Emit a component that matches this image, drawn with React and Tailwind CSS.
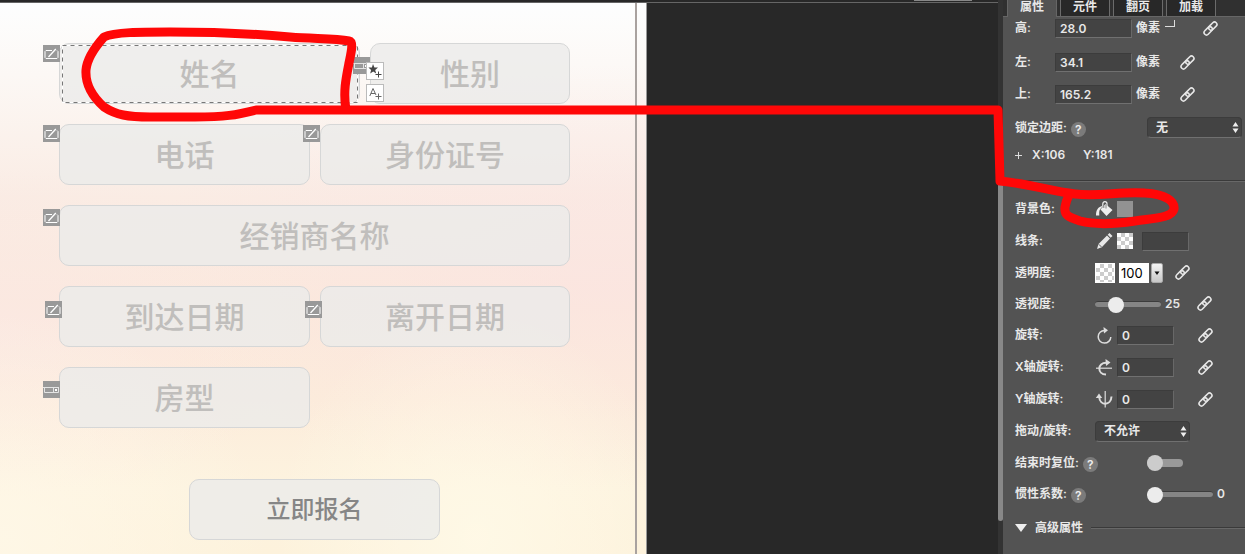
// src/App.jsx
import React, { useState } from "react";

const checker = "bg-white bg-[conic-gradient(#ccc_25%,#fff_0_50%,#ccc_0_75%,#fff_0)] bg-[length:8px_8px]";

function LinkIcon() {
  return (
    <svg className="w-[15px] h-[15px]" viewBox="0 0 15 15" fill="none" stroke="#e6e6e6" strokeWidth="1.6">
      <rect x="5" y="2.7" width="9.6" height="4.8" rx="2.4" transform="rotate(-45 9.8 5.1)" />
      <rect x="0.4" y="7.4" width="9.6" height="4.8" rx="2.4" transform="rotate(-45 5.2 9.8)" />
    </svg>
  );
}

function LinkButton({ className }) {
  return <button type="button" aria-label="link" className={className}><LinkIcon /></button>;
}

function Help() {
  return <button type="button" aria-label="help" className="ml-1 mt-1 w-[15px] h-[15px] rounded-full bg-[#7b7b7b] text-[12px] leading-[15px] text-center text-[#eee]">?</button>;
}

function InputBadge({ className }) {
  return (
    <svg className={"absolute w-[17px] h-[17px] " + className} viewBox="0 0 17 17" fill="none" stroke="#fff" strokeWidth="1">
      <rect width="17" height="17" fill="#999" stroke="none" />
      <path d="M9 5.5H3L2 6.5V12.5L3 13.5H14L15 12.5V6.5L14 5.5" />
      <path d="M5.5 12 12.8 4" strokeWidth="1.3" />
    </svg>
  );
}

function SelectBadge({ className }) {
  return (
    <svg className={"absolute w-[17px] h-[17px] " + className} viewBox="0 0 17 17" fill="none" stroke="#e4e4e4" strokeWidth="1">
      <rect width="17" height="17" fill="#999" stroke="none" />
      <path d="M0 6.5H16M1.5 7V11.5H15.5V7M10.5 7V11" />
      <rect x="12.5" y="8.5" width="1" height="1" stroke="#fff" />
    </svg>
  );
}

function Field({ label, width, children }) {
  return (
    <div className={"relative " + width}>
      <input
        aria-label={label}
        placeholder={label}
        className="block w-full h-[61px] rounded-[10px] border border-[#d6d7d7] bg-[#ebebea]/80 text-center text-[30px] font-medium text-[#777] placeholder:text-[#c0bebc] outline-none"
      />
      {children}
    </div>
  );
}

function Stage() {
  return (
    <div className="flex flex-1 w-[647px] bg-[radial-gradient(ellipse_at_95%_50%,rgba(251,226,226,0.55),transparent_55%),linear-gradient(180deg,#fdfefe_0%,#fcf8f5_13%,#faece4_35%,#fbe9dc_55%,#fcecdb_72%,#fdf3df_88%,#fdf2dc_100%)]">
      <form className="w-[637px] border-r-2 border-[#a9a29f] pl-[59px] pt-10 bg-[radial-gradient(ellipse_at_0%_97%,rgba(255,249,234,0.7),transparent_30%),radial-gradient(ellipse_at_75%_97%,rgba(255,250,232,0.8),transparent_30%),radial-gradient(ellipse_at_0%_60%,rgba(251,232,228,0.7),transparent_35%)]">
        <div className="flex flex-col gap-5 w-[511px]">
          <div className="flex gap-[10px]">
            <Field label="姓名" width="w-[301px]">
              <svg className="absolute left-[3px] top-[2px] w-[297px] h-[59px] pointer-events-none" viewBox="0 0 297 59" fill="none">
                <rect x="0.5" y="0.5" width="295" height="57" stroke="#fff" />
                <rect x="0.5" y="0.5" width="295" height="57" stroke="#777" strokeDasharray="4 4" />
              </svg>
              <InputBadge className="-left-4 top-[2px]" />
            </Field>
            <Field label="性别" width="flex-1">
              <SelectBadge className="-left-[17px] top-[14px]" />
              <div className="absolute -left-1 top-[19px] flex flex-col gap-[4px]">
                <button type="button" aria-label="star" className="w-[18px] h-[18px] bg-white border border-[#bbb]">
                  <svg className="w-4 h-4" viewBox="0 0 16 16">
                    <path d="M6 1 7.4 4.4 11 4.6 8.2 6.9 9.2 10.4 6.2 8.5 3.2 10.4 4.1 6.9 1.4 4.6 4.9 4.4Z" fill="#444" />
                    <path d="M11.5 8.5V14.5M8.5 11.5H14.5" stroke="#444" />
                  </svg>
                </button>
                <button type="button" aria-label="text" className="w-[18px] h-[18px] bg-white border border-[#bbb]">
                  <svg className="w-4 h-4" viewBox="0 0 16 16" fill="none" stroke="#666">
                    <path d="M2.8 11 6 3.5 9 10M4 8.5H8M11.5 8.5V14.5M8.5 11.5H14.5" />
                  </svg>
                </button>
              </div>
            </Field>
          </div>
          <div className="flex gap-[10px]">
            <Field label="电话" width="w-[251px]"><InputBadge className="-left-4 top-[1px]" /></Field>
            <Field label="身份证号" width="flex-1"><InputBadge className="-left-[17px] top-[1px]" /></Field>
          </div>
          <Field label="经销商名称" width="w-full"><InputBadge className="-left-4 top-1" /></Field>
          <div className="flex gap-[10px]">
            <Field label="到达日期" width="w-[251px]"><InputBadge className="-left-[14px] top-[15px]" /></Field>
            <Field label="离开日期" width="flex-1"><InputBadge className="-left-[15px] top-[15px]" /></Field>
          </div>
          <Field label="房型" width="w-[251px]"><SelectBadge className="-left-4 top-[14px]" /></Field>
          <button type="button" className="self-center mt-[31px] w-[251px] h-[61px] rounded-[10px] border border-[#d6d7d7] bg-[#ebebea]/80 text-[24px] font-medium text-[#868686]">立即报名</button>
        </div>
      </form>
      <div className="flex-1 border-r border-[#999]" />
    </div>
  );
}

function Row({ label, wide, className = "h-8", help, children }) {
  return (
    <div className={"flex items-center " + className}>
      <div className={"flex items-center shrink-0 whitespace-nowrap " + wide}>
        <span>{label}</span>
        {help && <Help />}
      </div>
      {children}
    </div>
  );
}

function Box({ label, width, value }) {
  return <input aria-label={label} defaultValue={value} className={"h-[19px] pl-[4px] bg-[#434343] border border-[#3c3c3c] border-r-[#686868] border-b-[#707070] text-[12px] leading-4 outline-none " + width} />;
}

function Select({ label, value }) {
  return (
    <div className="relative w-[95px]">
      <select aria-label={label} className="block w-full h-[21px] pl-2 appearance-none rounded bg-[#434343] border border-[#3c3c3c] border-b-[#707070] text-[12px] outline-none">
        <option>{value}</option>
      </select>
      <svg className="absolute right-[3px] top-[5px] w-[7px] h-[11px] pointer-events-none" viewBox="0 0 7 11" fill="#eee">
        <path d="M3.5 0 6.5 4.5H.5ZM3.5 11 .5 6.5H6.5Z" />
      </svg>
    </div>
  );
}

function Slider({ label, value, onChange }) {
  return (
    <input
      type="range"
      aria-label={label}
      value={value}
      onChange={e => onChange(e.target.value)}
      className="w-[66px] h-4 appearance-none bg-transparent [&::-webkit-slider-runnable-track]:h-[6px] [&::-webkit-slider-runnable-track]:rounded-sm [&::-webkit-slider-runnable-track]:bg-[#858585] [&::-webkit-slider-runnable-track]:border-t [&::-webkit-slider-runnable-track]:border-[#3c3c3c] [&::-webkit-slider-thumb]:appearance-none [&::-webkit-slider-thumb]:-mt-[5px] [&::-webkit-slider-thumb]:w-4 [&::-webkit-slider-thumb]:h-4 [&::-webkit-slider-thumb]:rounded-full [&::-webkit-slider-thumb]:bg-[#ececec]"
    />
  );
}

function RotateIcon({ axis }) {
  return (
    <svg className="w-[18px] h-[18px] mr-1" viewBox="0 0 18 18" fill="none" stroke="#ddd" strokeWidth="1.5">
      {axis === "z" && <><path d="M9.5 4.5A6.3 6.3 0 1 0 15.8 11" /><path d="M8.5 1 13 4.2 9 7.5Z" fill="#ddd" stroke="none" /></>}
      {axis === "x" && <><path d="M11.5 4.8C2 4.5 2 16 11 16.6" strokeWidth="2" /><path d="M1 10.2H17" strokeWidth="1.2" /><path d="M10.5 1 15.5 4.5 11 8Z" fill="#ddd" stroke="none" /></>}
      {axis === "y" && <><path d="M4.2 7C4.8 16 16 16 16.5 6.5" strokeWidth="2" /><path d="M10.2 1V17.5" strokeWidth="1.2" /><path d="M.8 8 4 3.5 7.2 8Z" fill="#ddd" stroke="none" /></>}
    </svg>
  );
}

function Panel() {
  const [perspective, setPerspective] = useState(25);
  const [inertia, setInertia] = useState(0);
  const tabs = ["属性", "元件", "翻页", "加载"];

  return (
    <aside className="w-[242px] shrink-0 bg-[#535353] text-[12px] font-semibold text-[#e8e8e8]">
      <nav className="flex gap-[3px] h-[17px] pl-1 bg-[#303030] border-b border-[#666]">
        {tabs.map((tab, i) => (
          <button
            key={tab}
            type="button"
            className={i === 0
              ? "w-[50px] h-[17px] leading-[14px] pb-[3px] bg-[#535353] border-x border-[#666]"
              : "w-[50px] h-4 leading-[14px] pb-[2px] bg-[#282828] border-x border-[#6b6b6b]"}
          >
            {tab}
          </button>
        ))}
      </nav>
      <div className="pl-3">
        <Row label="高:" wide="w-10" className="h-[22px] mb-[7px]">
          <Box label="高" width="w-[77px]" value="28.0" />
          <span className="ml-1">像素</span>
          <span className="ml-[5px] mt-[3px] w-[10px] h-[7px] self-start border-r border-b border-[#ddd]" />
          <LinkButton className="ml-7" />
        </Row>
        <Row label="左:" wide="w-10">
          <Box label="左" width="w-[77px]" value="34.1" />
          <span className="ml-1">像素</span>
          <LinkButton className="ml-5" />
        </Row>
        <Row label="上:" wide="w-10">
          <Box label="上" width="w-[77px]" value="165.2" />
          <span className="ml-1">像素</span>
          <LinkButton className="ml-5" />
        </Row>
        <Row label="锁定边距:" wide="w-[132px]" className="h-[35px]" help>
          <Select label="锁定边距" value="无" />
        </Row>
        <div className="flex items-center h-5">
          <svg className="w-[7px] h-[7px]" viewBox="0 0 7 7" stroke="#ddd"><path d="M3.5 0V7M0 3.5H7" /></svg>
          <span className="ml-[10px] w-[51px]">X:106</span>
          <span>Y:181</span>
        </div>
        <div className="mt-[15px] mb-[11px] -ml-3 h-[2px] bg-[#686868] border-t border-[#3a3a3a]" />

        <Row label="背景色:" wide="w-20">
          <svg className="w-[18px] h-[18px] mr-1" viewBox="0 0 18 18" fill="#eee">
            <path d="M10.5 4 17.5 10 11.5 16 5.5 9.5ZM1 15.5C1 10 3 6.5 8 6L5.3 9C3.8 10.5 4.3 14 4.3 15.5Z" />
            <path d="M7.8 6.5V3.8C7.8.8 12 .8 12 3.8V8" fill="none" stroke="#eee" strokeWidth="1.2" />
            <path d="M8.8 5.5V8M11 4.5V8.5" fill="none" stroke="#666" strokeWidth=".8" />
          </svg>
          <button type="button" aria-label="背景色" className="w-4 h-4 bg-[#929292]" />
        </Row>
        <Row label="线条:" wide="w-20">
          <svg className="w-[18px] h-[18px] mr-1" viewBox="0 0 18 18" fill="#e8e8e8">
            <path d="M2 17 3.5 12 12 3.5 15 6.5 6.8 15.2ZM12.7 2.8 14.5 1 17.5 4 15.7 5.8Z" />
            <path d="M3.8 12.3 6.4 14.9" stroke="#555" fill="none" />
          </svg>
          <button type="button" aria-label="线条" className={"w-4 h-4 mr-[9px] " + checker} />
          <Box label="线条宽度" width="w-[47px]" value="" />
        </Row>
        <Row label="透明度:" wide="w-20" className="h-[31px]">
          <button type="button" aria-label="透明度" className={"w-5 h-5 mr-1 border border-white " + checker} />
          <input aria-label="透明度数值" defaultValue="100" className="w-[30px] h-5 pl-[2px] bg-white text-black text-[13px] font-normal outline-none" />
          <button type="button" aria-label="open" className="ml-[2px] w-[12px] h-5 rounded-[2px] bg-linear-to-b from-[#f4f4f4] to-[#c8c8c8] border border-[#aaa]">
            <svg className="w-[10px] h-[6px]" viewBox="0 0 10 6"><path d="M2.5 1.5H7.5L5 5Z" fill="#111" /></svg>
          </button>
          <LinkButton className="ml-3" />
        </Row>
        <Row label="透视度:" wide="w-20" className="h-[31px]">
          <Slider label="透视度" value={perspective} onChange={setPerspective} />
          <span className="ml-1 w-8">{perspective}</span>
          <LinkButton />
        </Row>
        <Row label="旋转:" wide="w-20">
          <RotateIcon axis="z" />
          <Box label="旋转" width="w-[57px]" value="0" />
          <LinkButton className="ml-6" />
        </Row>
        <Row label="X轴旋转:" wide="w-20">
          <RotateIcon axis="x" />
          <Box label="X轴旋转" width="w-[57px]" value="0" />
          <LinkButton className="ml-6" />
        </Row>
        <Row label="Y轴旋转:" wide="w-20">
          <RotateIcon axis="y" />
          <Box label="Y轴旋转" width="w-[57px]" value="0" />
          <LinkButton className="ml-6" />
        </Row>
        <Row label="拖动/旋转:" wide="w-20">
          <Select label="拖动/旋转" value="不允许" />
        </Row>
        <Row label="结束时复位:" wide="w-[132px]" className="h-[31px]" help>
          <input type="checkbox" aria-label="结束时复位" className="appearance-none flex items-center w-9 h-2 rounded-full bg-[#999] before:w-4 before:h-4 before:shrink-0 before:rounded-full before:bg-[#ccc] checked:justify-end" />
        </Row>
        <Row label="惯性系数:" wide="w-[132px]" className="h-[31px]" help>
          <Slider label="惯性系数" value={inertia} onChange={setInertia} />
          <span className="ml-1">{inertia}</span>
        </Row>
        <div className="flex items-center h-[38px]">
          <button type="button" className="flex items-center gap-2">
            <svg className="w-3 h-2" viewBox="0 0 12 8" fill="#eee"><path d="M0 0H12L6 8Z" /></svg>
            高级属性
          </button>
          <div className="ml-2 flex-1 h-[2px] bg-[#686868] border-t border-[#3a3a3a]" />
        </div>
      </div>
    </aside>
  );
}

// hand drawn marker going from the name field to the background colour row
function Marker() {
  return (
    <svg className="absolute left-0 top-0 w-[1245px] h-[554px] pointer-events-none" viewBox="0 0 1245 554" fill="none" stroke="#ff0707" strokeWidth="9" strokeLinecap="round" strokeLinejoin="round">
      <path d="M346 110C343 92 346 78 349 63C351 53 354 42 349 41C335 38 315 39 290 37C245 33 205 32 170 32C140 32 115 32 104 37C96 46 87 58 86 70C85 86 94 98 104 107C116 115 128 117 150 117H195C225 117 236 115 256 110H998L1000 181C1030 184 1050 191 1075 194C1100 197 1120 191 1145 193C1165 194 1175 201 1174 209C1172 218 1155 218 1135 221C1115 224 1095 225 1080 221C1068 217 1064 215 1065 207Q1066 201 1069 195" />
    </svg>
  );
}

export default function App() {
  return (
    <div className="relative flex min-h-screen overflow-hidden bg-[#282828] font-['Inter','Noto_Sans_CJK_SC',sans-serif]">
      <main className="flex flex-1 flex-col">
        <div className="h-[3px] border-b border-[#666] bg-[#282828]">
          <div className="ml-[914px] w-[58px] h-px bg-[#888]" />
        </div>
        <Stage />
      </main>
      <div className="w-[5px] bg-[#333] pt-[184px]">
        <div className="h-[337px] rounded-b bg-[#888]" />
      </div>
      <Panel />
      <Marker />
    </div>
  );
}
